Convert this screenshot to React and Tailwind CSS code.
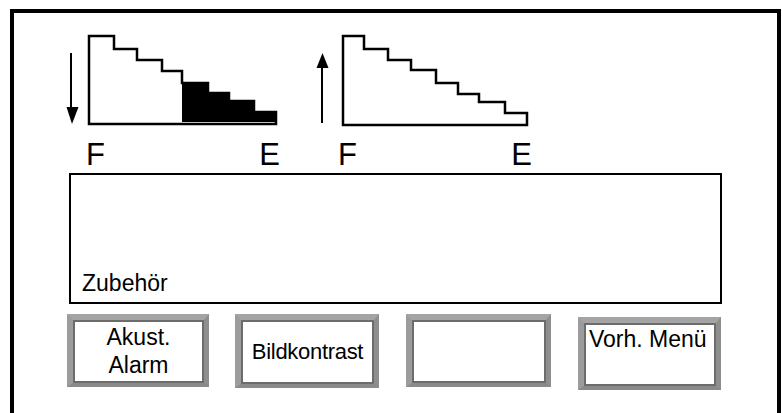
const font = { fontFamily: '"Liberation Sans", Arial, sans-serif' };

function BevelButton({ className = '', innerClassName = '', children }) {
  return (
    <div
      className={`border-solid border-t-[6px] border-l-[6px] border-r-[5px] border-b-[4px] border-t-[#a4a4a4] border-l-[#9c9c9c] border-r-[#8e8e8e] border-b-[#8a8a8a] ${className}`}
    >
      <div className={`h-full border-2 border-[#6c6c6c] bg-white text-black ${innerClassName}`}>{children}</div>
    </div>
  );
}

function DrainChart() {
  return (
    <svg width="218" height="98" viewBox="62 30 218 98" className="block">
      <line x1="71" y1="53" x2="71" y2="109" stroke="#000" strokeWidth="2" />
      <polygon points="66.5,107 78.5,107 72,124" fill="#000" />
      <path
        d="M182,83 H208 V93 H229 V101 H254 V112 H276 V122 H182 Z"
        fill="#000"
      />
      <path
        d="M89,124 V36 H114 V49 H137 V60 H162 V71 H182 V83 H208 V93 H229 V101 H254 V112 H276 V124 Z"
        fill="none"
        stroke="#000"
        strokeWidth="2.5"
        strokeLinejoin="miter"
      />
    </svg>
  );
}

function FillChart() {
  return (
    <svg width="222" height="98" viewBox="310 30 222 98" className="block">
      <line x1="322" y1="66" x2="322" y2="123" stroke="#000" strokeWidth="2" />
      <polygon points="316.5,68 328.5,68 322.5,53" fill="#000" />
      <path
        d="M343,125 V36 H364 V49 H388 V60 H411 V70 H436 V83 H458 V94 H479 V102 H505 V113 H527 V125 Z"
        fill="none"
        stroke="#000"
        strokeWidth="2.5"
      />
    </svg>
  );
}

export default function App() {
  return (
    <div className="h-[413px] w-[782px] overflow-hidden bg-white text-black" style={font}>
      <div className="ml-[10px] mt-[9px] flex h-[404px] w-[771px] flex-col border-4 border-b-0 border-black">
        {/* tank charts */}
        <div className="mt-[17px] flex">
          <div className="ml-[48px] flex flex-col">
            <DrainChart />
            <div className="ml-[24px] mt-[12px] flex w-[194px] justify-between text-[31px] leading-[30px]">
              <span>F</span>
              <span>E</span>
            </div>
          </div>
          <div className="ml-[30px] flex flex-col">
            <FillChart />
            <div className="ml-[28px] mt-[12px] flex w-[194px] justify-between text-[31px] leading-[30px]">
              <span>F</span>
              <span>E</span>
            </div>
          </div>
        </div>

        {/* message box */}
        <div className="ml-[55px] mt-[3px] flex h-[131px] w-[653px] items-end border-2 border-black pb-[6px] pl-[11px]">
          <span className="text-[23px] leading-[26px]">Zubehör</span>
        </div>

        {/* soft keys */}
        <div className="ml-[53px] mt-[10px] flex items-start">
          <BevelButton className="h-[73px] w-[142px]" innerClassName="flex flex-col items-center pt-[1px] text-[23px] leading-[28px]">
            <span>Akust.</span>
            <span>Alarm</span>
          </BevelButton>
          <BevelButton className="ml-[26px] h-[74px] w-[144px]" innerClassName="flex items-center justify-center text-[22px] leading-[28px] tracking-[-0.3px]">
            <span>Bildkontrast</span>
          </BevelButton>
          <BevelButton className="ml-[27px] h-[73px] w-[145px]" />
          <BevelButton className="ml-[27px] mt-[3px] h-[73px] w-[143px]" innerClassName="pl-[3px] text-[23px] leading-[28px]">
            <span>Vorh. Menü</span>
          </BevelButton>
        </div>
      </div>
    </div>
  );
}
